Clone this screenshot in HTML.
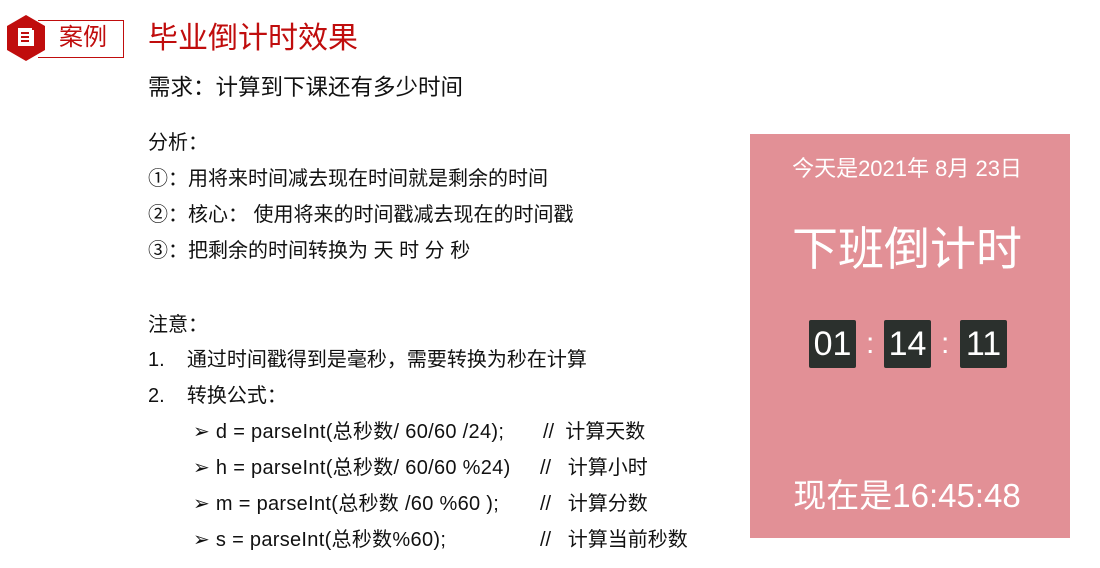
<!DOCTYPE html>
<html><head><meta charset="utf-8"><style>
body{margin:0;width:1100px;height:568px;background:#fff;position:relative;overflow:hidden;font-family:"Liberation Sans","Noto Sans CJK SC",sans-serif;color:#111}
.a{position:absolute;white-space:nowrap}
.t{font-size:20px;line-height:24px}
.panel{position:absolute;left:750px;top:134px;width:320px;height:404px;background:#e29096;color:#fff}
.box{position:absolute;top:186px;width:47px;height:48px;background:#2b302d;border-radius:2px;color:#fff;font-size:34px;line-height:48px;text-align:center}
.col{position:absolute;top:186px;font-size:30px;line-height:48px}
</style></head><body>
<svg class="a" style="left:5px;top:14px" width="42" height="48" viewBox="0 0 42 48"><polygon points="21,1 40,12 40,36 21,47 2,36 2,12" fill="#c00d0d"/><rect x="13" y="14" width="14" height="18" fill="#fff"/><rect x="16" y="18" width="8" height="2" fill="#c00d0d"/><rect x="16" y="22" width="8" height="2" fill="#c00d0d"/><rect x="16" y="26" width="8" height="2" fill="#c00d0d"/><rect x="27" y="16" width="2" height="16" fill="#fff"/></svg>
<div class="a" style="left:38px;top:20px;width:85px;height:36px;border:1px solid #c00d0d;border-left:none;"></div>
<div class="a" style="left:59px;top:22px;font-size:24px;line-height:32px;color:#c00d0d">案例</div>
<div class="a" style="left:148px;top:19px;font-size:30px;line-height:40px;color:#c00d0d">毕业倒计时效果</div>
<div class="a" style="left:148px;top:73px;font-size:22.5px;line-height:30px">需求：计算到下课还有多少时间</div>
<div class="a t" style="left:148px;top:131px">分析：</div>
<div class="a t" style="left:148px;top:167px">①：用将来时间减去现在时间就是剩余的时间</div>
<div class="a t" style="left:148px;top:203px">②：核心： 使用将来的时间戳减去现在的时间戳</div>
<div class="a t" style="left:148px;top:239px">③：把剩余的时间转换为 天 时 分 秒</div>
<div class="a t" style="left:148px;top:313px">注意：</div>
<div class="a t" style="left:148px;top:348px">1.&nbsp;&nbsp;&nbsp; 通过时间戳得到是毫秒，需要转换为秒在计算</div>
<div class="a t" style="left:148px;top:384px">2.&nbsp;&nbsp;&nbsp; 转换公式：</div>
<div class="a t" style="left:193px;top:420px;letter-spacing:0.3px">➢ d = parseInt(总秒数/ 60/60 /24);</div><div class="a t" style="left:543px;top:420px">//&nbsp; 计算天数</div>
<div class="a t" style="left:193px;top:456px;letter-spacing:0.3px">➢ h = parseInt(总秒数/ 60/60 %24)</div><div class="a t" style="left:540px;top:456px">//&nbsp;&nbsp; 计算小时</div>
<div class="a t" style="left:193px;top:492px;letter-spacing:0.3px">➢ m = parseInt(总秒数 /60 %60 );</div><div class="a t" style="left:540px;top:492px">//&nbsp;&nbsp; 计算分数</div>
<div class="a t" style="left:193px;top:528px;letter-spacing:0.3px">➢ s = parseInt(总秒数%60);</div><div class="a t" style="left:540px;top:528px">//&nbsp;&nbsp; 计算当前秒数</div>
<div class="panel">
<div class="a" style="left:0;width:314px;text-align:center;top:20px;font-size:22px;line-height:30px">今天是2021年 8月 23日</div>
<div class="a" style="left:0;width:314px;text-align:center;top:86px;font-size:46px;line-height:58px">下班倒计时</div>
<div class="box" style="left:59px">01</div><div class="col" style="left:116px">:</div>
<div class="box" style="left:134px">14</div><div class="col" style="left:191px">:</div>
<div class="box" style="left:210px">11</div>
<div class="a" style="left:0;width:314px;text-align:center;top:341px;font-size:33px;line-height:42px">现在是16:45:48</div>
</div>
</body></html>
